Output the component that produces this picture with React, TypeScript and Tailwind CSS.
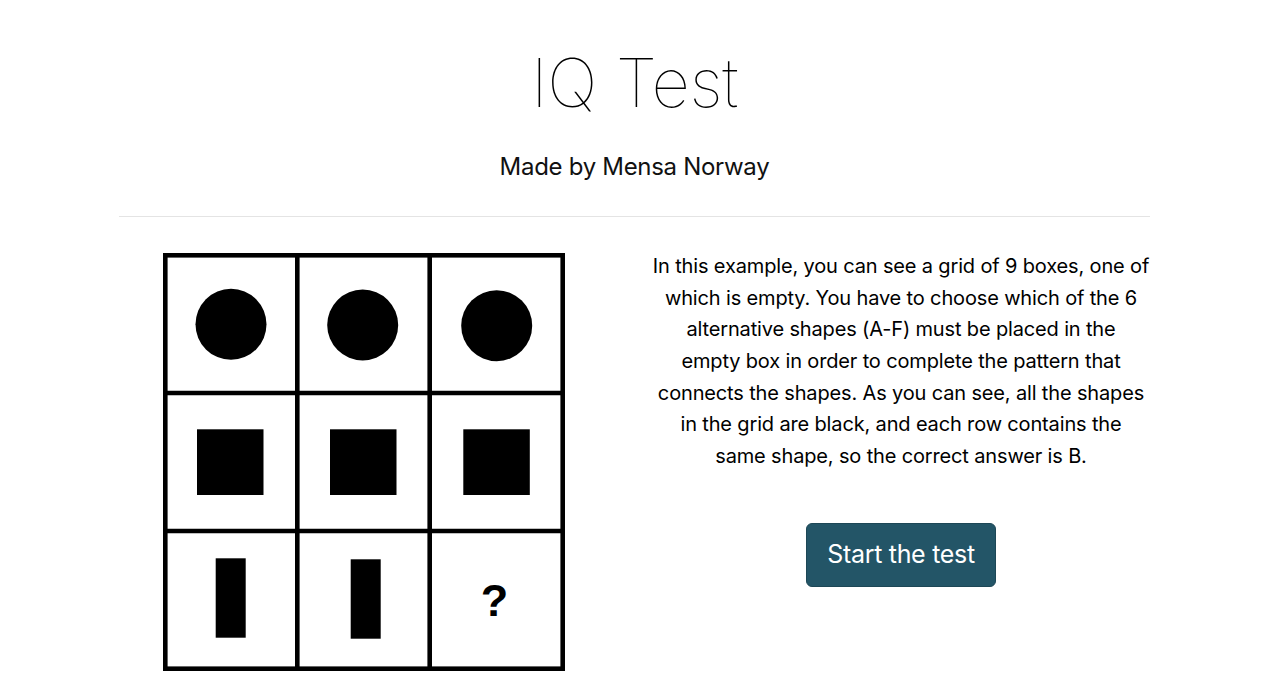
import React from 'react';

const sans = { fontFamily: 'Inter, "Noto Sans", sans-serif' };

const circles = [
  { cx: 68, cy: 71.3 },
  { cx: 199.7, cy: 72 },
  { cx: 333.7, cy: 72.7 },
];

const squares = [
  { x: 34, y: 176.3 },
  { x: 167, y: 176.3 },
  { x: 300.3, y: 176.3 },
];

const bars = [
  { x: 52.7, y: 305.3 },
  { x: 187.7, y: 306.3 },
];

function PuzzleGrid() {
  return (
    <svg width="402" height="418" viewBox="0 0 402 418" className="block">
      <rect x="0" y="0" width="402" height="418" fill="#fff" />
      {circles.map((c, i) => (
        <circle key={i} cx={c.cx} cy={c.cy} r="35.5" fill="#000" />
      ))}
      {squares.map((s, i) => (
        <rect key={i} x={s.x} y={s.y} width="66.5" height="65.7" fill="#000" />
      ))}
      {bars.map((b, i) => (
        <rect key={i} x={b.x} y={b.y} width="30" height="79.4" fill="#000" />
      ))}
      <text
        x="331.5"
        y="363"
        textAnchor="middle"
        fontSize="45"
        fontWeight="700"
        fontFamily='"Liberation Sans", Arial, sans-serif'
        fill="#000"
      >
        ?
      </text>
      <line x1="134.3" y1="0" x2="134.3" y2="418" stroke="#000" strokeWidth="4.6" />
      <line x1="266.7" y1="0" x2="266.7" y2="418" stroke="#000" strokeWidth="4.6" />
      <line x1="0" y1="140" x2="402" y2="140" stroke="#000" strokeWidth="4.6" />
      <line x1="0" y1="278" x2="402" y2="278" stroke="#000" strokeWidth="4.6" />
      <rect x="2.3" y="2.3" width="397.4" height="413.4" fill="none" stroke="#000" strokeWidth="4.6" />
    </svg>
  );
}

export default function App() {
  return (
    <div className="min-h-screen bg-white text-black" style={sans}>
      <div className="ml-[119px] w-[1031px] pt-[43px]">
        {/* Header */}
        <h1 className="text-center text-[67px] leading-[80px] font-thin tracking-[-0.3px]">IQ Test</h1>
        <p className="mt-[29px] text-center text-[24px] leading-[29px] font-normal tracking-[-0.3px] text-[#111]">
          Made by Mensa Norway
        </p>

        <hr className="mt-[35px] border-0 border-t border-[#e4e4e4]" />

        {/* Example */}
        <div className="flex">
          <div className="shrink-0 pt-[36px] pl-[44px] w-[521px]">
            <PuzzleGrid />
          </div>

          <div className="shrink-0 flex flex-col items-center w-[522px] pt-[34px]">
            <p className="text-center text-[20px] leading-[31.65px] tracking-[-0.15px] whitespace-nowrap">
              In this example, you can see a grid of 9 boxes, one of
              <br />
              which is empty. You have to choose which of the 6
              <br />
              alternative shapes (A-F) must be placed in the
              <br />
              empty box in order to complete the pattern that
              <br />
              connects the shapes. As you can see, all the shapes
              <br />
              in the grid are black, and each row contains the
              <br />
              same shape, so the correct answer is B.
            </p>

            <button className="mt-[50px] w-[190px] h-[64px] rounded-[6px] bg-[#235567] border border-[#1d4756] text-white text-[25px] tracking-[-0.3px]">
              Start the test
            </button>
          </div>
        </div>
      </div>
    </div>
  );
}
